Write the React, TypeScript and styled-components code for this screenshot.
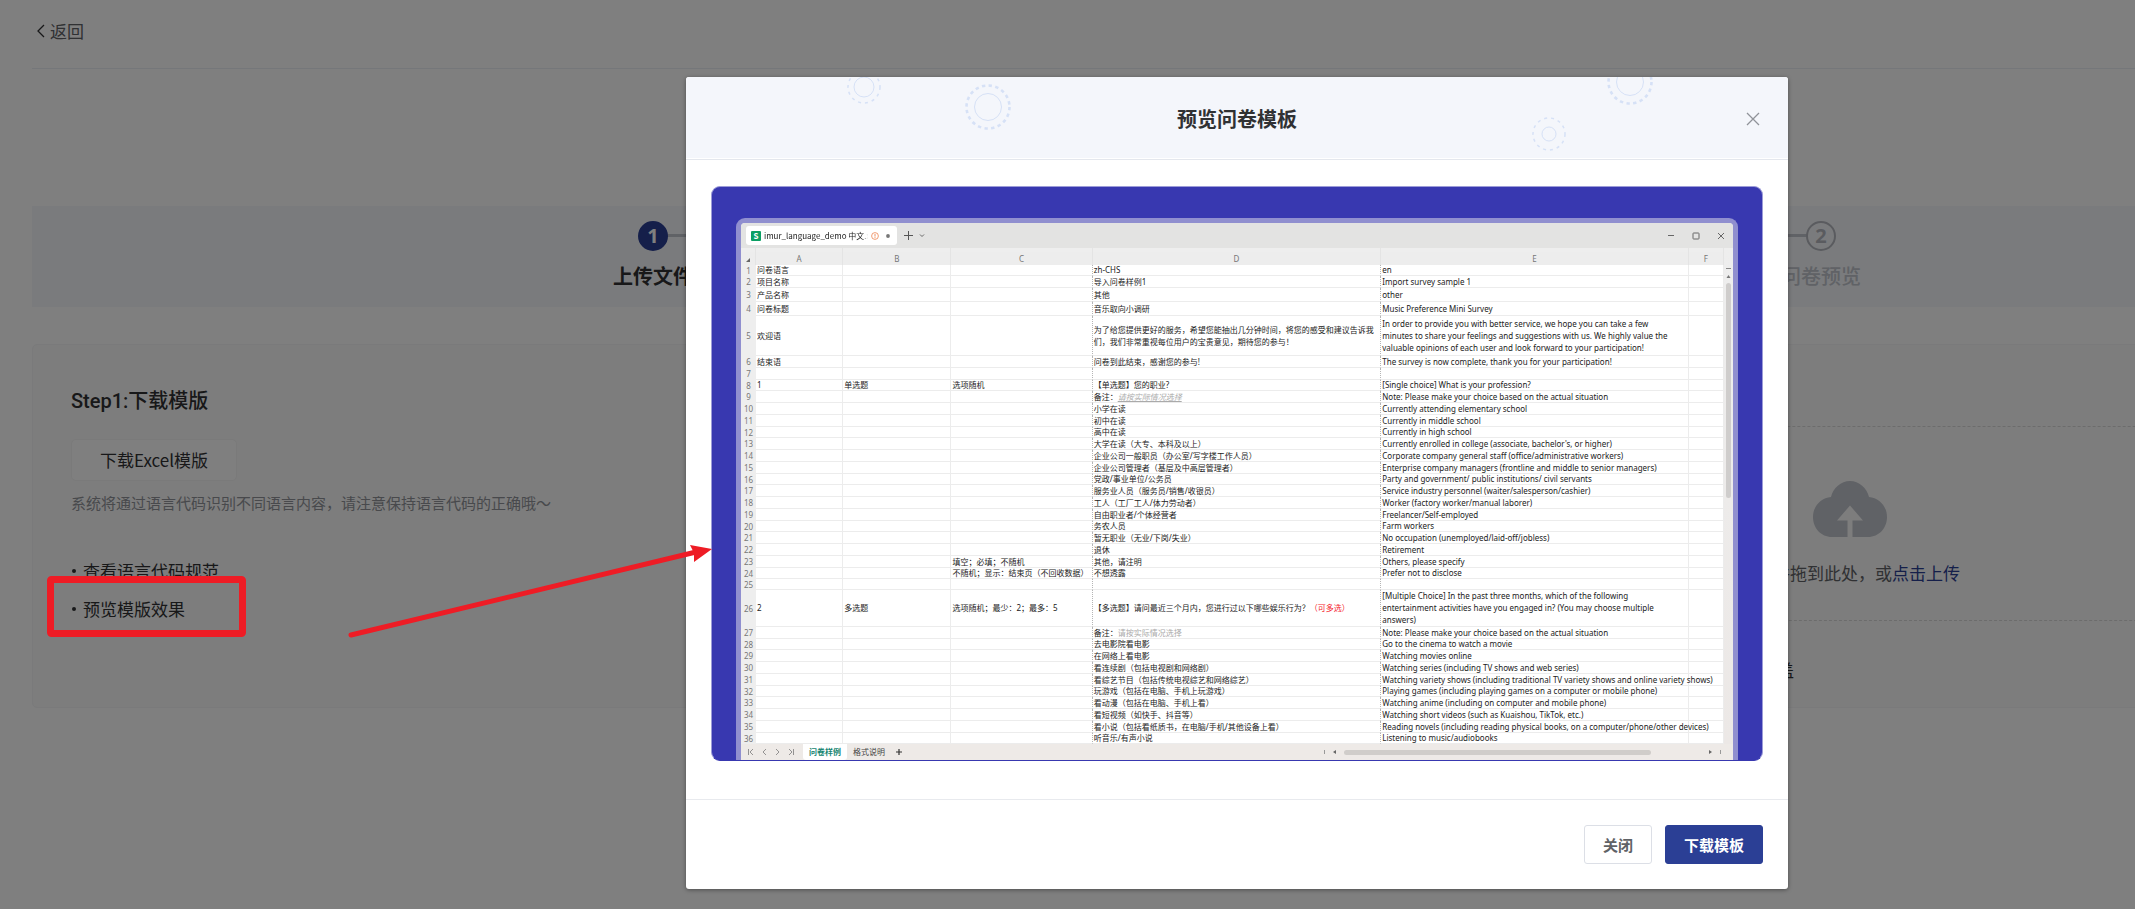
import React from "react";
import styled, { createGlobalStyle, css } from "styled-components";

const GlobalStyle = createGlobalStyle`
  *, *::before, *::after { box-sizing: border-box; }
  html, body { margin: 0; height: 100%; overflow: hidden; background: #fff; }
  body {
    font-family: "Noto Sans CJK SC", "Noto Sans", sans-serif;
    font-size: 17px;
    line-height: 24px;
    color: #303133;
  }
  button, input { font: inherit; }
`;

/* The workspace is wider than the window and is cut off at the right edge. */
const Page = styled.div`
  position: relative;
  width: calc(100vw + 339px);
  min-height: 100vh;
  padding: 0 32px;
`;

const TopBar = styled.header`
  display: flex;
  align-items: center;
  height: 69px;
  padding: 0 0 7px 4px;
  border-bottom: 1px solid #ebeef5;
`;

const BackLink = styled.a`
  display: flex;
  align-items: center;
  gap: 5px;
  color: #606266;
  text-decoration: none;
`;

const StepBar = styled.ol`
  display: flex;
  list-style: none;
  margin: 137px 0 0;
  padding: 15px 37px;
  height: 101px;
  background: #f5f7fa;
`;

const StepItem = styled.li<{ $active?: boolean }>`
  position: relative;
  flex: 1;
  display: flex;
  flex-direction: column;
  align-items: center;
  gap: 13px;
  font-size: 20px;
  font-weight: ${(p) => (p.$active ? 700 : 500)};
  color: ${(p) => (p.$active ? "#303133" : "#c0c4cc")};

  &:not(:last-child)::after {
    content: "";
    position: absolute;
    top: 13px;
    left: 50%;
    width: 100%;
    height: 3px;
    background: #c0c4cc;
  }
`;

const StepNumber = styled.span<{ $active?: boolean }>`
  position: relative;
  z-index: 1;
  display: flex;
  align-items: center;
  justify-content: center;
  width: 30px;
  height: 30px;
  border-radius: 50%;
  border: 2px solid ${(p) => (p.$active ? "#2b3f95" : "#b4b7be")};
  background: ${(p) => (p.$active ? "#2b3f95" : "#f5f7fa")};
  color: ${(p) => (p.$active ? "#fff" : "#b4b7be")};
  font-family: "Open Sans", sans-serif;
  font-weight: 700;
`;

const Cards = styled.main`
  display: grid;
  grid-template-columns: 1fr 1fr;
  gap: 40px;
  margin-top: 37px;
`;

const Card = styled.section`
  height: 364px;
  padding: 44px 38px 0;
  border: 1px solid #f4f5f7;
  border-radius: 5px;
  background: #fafafa;
`;

const CardTitle = styled.h2`
  margin: 0;
  font-family: Roboto, "Noto Sans CJK SC", sans-serif;
  font-size: 20px;
  font-weight: 500;
  line-height: 24px;
  color: #303133;
`;

const TemplateButton = styled.button`
  display: block;
  height: 42px;
  margin: 26px 0 10px;
  padding: 0 28px;
  border: 1px solid #f5f5f5;
  border-radius: 5px;
  background: #fff;
  color: #303133;
`;

const Hint = styled.p`
  margin: 0;
  font-size: 15px;
  color: #909399;
`;

const Notes = styled.ul`
  list-style: none;
  margin: 44px 0 0;
  padding: 0;
  display: grid;
  gap: 14px;
`;

const Note = styled.li`
  display: flex;
  align-items: center;
  gap: 7px;
  color: #303133;

  &::before {
    content: "";
    width: 4px;
    height: 4px;
    margin-left: 1px;
    border-radius: 50%;
    background: #303133;
  }

  a { color: inherit; text-decoration: none; }
`;

const DropZone = styled.div`
  display: flex;
  flex-direction: column;
  align-items: center;
  height: 195px;
  margin-top: 13px;
  padding-top: 54px;
  border: 1px dashed #d9d9d9;
  border-radius: 6px;
  color: #606266;

  p { margin: 24px 0 0; }
  a { color: #2b3f95; text-decoration: none; }
`;

const UploadNotes = styled(Notes)`
  margin-top: 37px;
`;

const Overlay = styled.div`
  position: absolute;
  inset: 0;
  display: flex;
  justify-content: center;
  align-items: flex-start;
  padding-top: 77px;
  background: rgba(0, 0, 0, 0.5);
  z-index: 2;
`;

const Dialog = styled.div`
  width: 1102px;
  border-radius: 3px;
  background: #fff;
  box-shadow: 0 1px 4px rgba(0, 0, 0, 0.4);
  overflow: hidden;
`;

const DialogHeader = styled.header`
  position: relative;
  display: grid;
  grid-template-columns: 1fr auto 1fr;
  align-items: center;
  height: 82px;
  padding: 2px 25px 0;
  background: #f4f6fb;
  border-bottom: 1px solid #fff;
`;

const HeaderArt = styled.svg`
  position: absolute;
  inset: 0;
  width: 100%;
  height: 100%;
`;

const DialogTitle = styled.h1`
  grid-column: 2;
  position: relative;
  margin: 0;
  font-size: 20px;
  line-height: 28px;
  font-weight: 700;
  color: #303133;
`;

const CloseIcon = styled.button`
  position: relative;
  justify-self: end;
  display: flex;
  width: 20px;
  height: 20px;
  padding: 3px;
  border: 0;
  background: none;
`;

const DialogBody = styled.div`
  padding: 26px 25px 38px;
  border-top: 1px solid #e4e7ed;
  border-bottom: 1px solid #e8eaee;
`;

const DialogFooter = styled.footer`
  display: flex;
  justify-content: flex-end;
  gap: 13px;
  padding: 25px;
`;

const ActionButton = styled.button<{ $primary?: boolean }>`
  height: 39px;
  padding: 0 18px;
  border: 1px solid ${(p) => (p.$primary ? "#2b3f95" : "#dcdfe6")};
  border-radius: 3px;
  background: ${(p) => (p.$primary ? "#2b3f95" : "#fff")};
  color: ${(p) => (p.$primary ? "#fff" : "#606266")};
  font-size: 15px;
  font-weight: 700;
  line-height: 20px;
`;

const Preview = styled.figure`
  display: flex;
  margin: 0;
  padding: 31px 24px 0;
  height: 575px;
  border: 1px solid #9c9cd8;
  border-bottom-color: #3838b0;
  border-radius: 9px;
  background: #3838b0;
  overflow: hidden;
`;

const SheetWindow = styled.div`
  flex: 1;
  min-width: 0;
  display: flex;
  flex-direction: column;
  border: 5px solid #908fcf;
  border-bottom: 0;
  border-radius: 9px 9px 0 0;
  background: #eeeeee;
  overflow: hidden;
  font-size: 8px;
  line-height: 12px;
  color: #222;
`;

const TitleBar = styled.div`
  display: flex;
  align-items: center;
  height: 25px;
  padding: 0 6px 0 5px;
  background: #e3e3e2;
`;

const FileTab = styled.div`
  display: flex;
  align-items: center;
  gap: 3px;
  width: 151px;
  height: 19px;
  padding: 0 5px;
  border-radius: 3px;
  background: #fff;

  svg { flex: none; }
`;

const FileBadge = styled.span`
  flex: none;
  display: flex;
  align-items: center;
  justify-content: center;
  width: 10px;
  height: 10px;
  border-radius: 1px;
  background: #0b9f64;
  color: #fff;
  font-weight: 700;
`;

const FileName = styled.span`
  flex: 1;
  overflow: hidden;
  white-space: nowrap;
  mask-image: linear-gradient(to right, #000 95%, transparent);
`;

const TabTools = styled.div`
  display: flex;
  align-items: center;
  gap: 6px;
  margin-left: 7px;
`;

const WindowTools = styled.div`
  display: flex;
  align-items: center;
  gap: 13px;
  margin-left: auto;
`;

const SheetArea = styled.div`
  display: flex;
`;

const Sheet = styled.table`
  flex: 1;
  width: 100%;
  min-width: 0;
  table-layout: fixed;
  border-collapse: separate;
  border-spacing: 0;
  background: #fff;
  font-family: "Noto Sans", "Noto Sans CJK SC", sans-serif;

  thead th {
    height: 17px;
    padding: 4px 0 0;
    background: linear-gradient(#eeeeee 4px, transparent 4px), #ededed;
    border-right: 1px solid #e4e4e4;
    font-weight: 400;
    color: #777;
  }

  tbody tr { height: 12px; }
  tbody tr:nth-child(4n) { height: 11px; }

  tbody th {
    padding: 0;
    background: #eeeeee;
    font-weight: 400;
    color: #777;
    line-height: 10px;
  }

  tbody td {
    padding: 0 0 0 1px;
    border-right: 1px solid #ececec;
    border-bottom: 1px solid #ececec;
    white-space: pre;
    line-height: 10px;
  }

  tbody td:nth-child(4),
  tbody td:nth-child(5) { border-right: 1px dotted #b5b5b5; }
`;

const Row = styled.tr<{ $height?: number }>`
  ${(p) =>
    p.$height &&
    css`
      &&& { height: ${p.$height}px; }
    `}
  ${(p) =>
    p.$height &&
    p.$height > 20 &&
    css`
      &&& td { line-height: 12px; }
    `}
`;

const Placeholder = styled.span<{ $marked?: boolean }>`
  color: #aaa;
  ${(p) => p.$marked && "font-style: italic; text-decoration: underline;"}
`;

const Multi = styled.span`
  color: #f5232d;
`;

const VerticalScroll = styled.div`
  position: relative;
  flex: none;
  display: flex;
  flex-direction: column;
  align-items: center;
  width: 9px;
  padding-top: 19px;
  background: linear-gradient(#eeeeee, #ece8e6);
`;

const VerticalThumb = styled.div`
  width: 5px;
  height: 215px;
  margin-top: 2px;
  border-radius: 3px;
  background: #cfcdcc;
`;

const SheetTabs = styled.div`
  flex: 1;
  display: flex;
  align-items: center;
  padding: 0 10px 0 6px;
  background: #eeeae7;
  color: #555;
`;

const SheetTab = styled.span<{ $active?: boolean }>`
  align-self: stretch;
  padding: 2px 6px 0;
  border-radius: 0 0 3px 3px;
  background: ${(p) => (p.$active ? "#fff" : "transparent")};
  color: ${(p) => (p.$active ? "#168571" : "#444")};
  font-weight: ${(p) => (p.$active ? 700 : 400)};
`;

const HorizontalScroll = styled.div`
  display: flex;
  align-items: center;
  margin-left: auto;
`;

const HorizontalThumb = styled.div`
  width: 307px;
  height: 5px;
  margin: 0 56px 0 5px;
  border-radius: 3px;
  background: #d0cdca;
`;

const Annotation = styled.svg`
  position: absolute;
  top: 0;
  left: 0;
  z-index: 3;
  pointer-events: none;
`;

type Line = {
  a?: string;
  b?: string;
  c?: string;
  d?: React.ReactNode;
  e?: string;
  h?: number;
};

const rows: Line[] = [
  { a: "问卷语言", d: "zh-CHS", e: "en", h: 11 },
  { a: "项目名称", d: "导入问卷样例1", e: "Import survey sample 1" },
  { a: "产品名称", d: "其他", e: "other", h: 14 },
  { a: "问卷标题", d: "音乐取向小调研", e: "Music Preference Mini Survey", h: 14 },
  {
    a: "欢迎语",
    d: "为了给您提供更好的服务，希望您能抽出几分钟时间，将您的感受和建议告诉我\n们，我们非常重视每位用户的宝贵意见，期待您的参与！",
    e: "In order to provide you with better service, we hope you can take a few\nminutes to share your feelings and suggestions with us. We highly value the\nvaluable opinions of each user and look forward to your participation!",
    h: 40,
  },
  { a: "结束语", d: "问卷到此结束，感谢您的参与!", e: "The survey is now complete, thank you for your participation!" },
  {},
  { a: "1", b: "单选题", c: "选项随机", d: "【单选题】您的职业?", e: "[Single choice] What is your profession?" },
  {
    d: <>备注：<Placeholder $marked>请按实际情况选择</Placeholder></>,
    e: "Note: Please make your choice based on the actual situation",
  },
  { d: "小学在读", e: "Currently attending elementary school" },
  { d: "初中在读", e: "Currently in middle school" },
  { d: "高中在读", e: "Currently in high school" },
  { d: "大学在读（大专、本科及以上）", e: "Currently enrolled in college (associate, bachelor's, or higher)" },
  { d: "企业公司一般职员（办公室/写字楼工作人员）", e: "Corporate company general staff (office/administrative workers)" },
  { d: "企业公司管理者（基层及中高层管理者）", e: "Enterprise company managers (frontline and middle to senior managers)" },
  { d: "党政/事业单位/公务员", e: "Party and government/ public institutions/ civil servants" },
  { d: "服务业人员（服务员/销售/收银员）", e: "Service industry personnel (waiter/salesperson/cashier)" },
  { d: "工人（工厂工人/体力劳动者）", e: "Worker (factory worker/manual laborer)" },
  { d: "自由职业者/个体经营者", e: "Freelancer/Self-employed" },
  { d: "务农人员", e: "Farm workers" },
  { d: "暂无职业（无业/下岗/失业）", e: "No occupation (unemployed/laid-off/jobless)" },
  { d: "退休", e: "Retirement" },
  { c: "填空；必填；不随机", d: "其他，请注明", e: "Others, please specify" },
  { c: "不随机；显示：结束页（不回收数据）", d: "不想透露", e: "Prefer not to disclose" },
  { h: 11 },
  {
    a: "2",
    b: "多选题",
    c: "选项随机；最少：2；最多：5",
    d: <>【多选题】请问最近三个月内，您进行过以下哪些娱乐行为？<Multi>（可多选）</Multi></>,
    e: "[Multiple Choice] In the past three months, which of the following\nentertainment activities have you engaged in? (You may choose multiple\nanswers)",
    h: 37,
  },
  {
    d: <>备注：<Placeholder>请按实际情况选择</Placeholder></>,
    e: "Note: Please make your choice based on the actual situation",
  },
  { d: "去电影院看电影", e: "Go to the cinema to watch a movie" },
  { d: "在网络上看电影", e: "Watching movies online" },
  { d: "看连续剧（包括电视剧和网络剧）", e: "Watching series (including TV shows and web series)" },
  { d: "看综艺节目（包括传统电视综艺和网络综艺）", e: "Watching variety shows (including traditional TV variety shows and online variety shows)" },
  { d: "玩游戏（包括在电脑、手机上玩游戏）", e: "Playing games (including playing games on a computer or mobile phone)" },
  { d: "看动漫（包括在电脑、手机上看）", e: "Watching anime (including on computer and mobile phone)" },
  { d: "看短视频（如快手、抖音等）", e: "Watching short videos (such as Kuaishou, TikTok, etc.)" },
  { d: "看小说（包括看纸质书，在电脑/手机/其他设备上看）", e: "Reading novels (including reading physical books, on a computer/phone/other devices)" },
  { d: "听音乐/有声小说", e: "Listening to music/audiobooks" },
];

const columns = [
  { name: "A", width: 87 },
  { name: "B", width: 108 },
  { name: "C", width: 141 },
  { name: "D", width: 288 },
  { name: "E", width: 307 },
  { name: "F", width: 35 },
];

const rings = [
  { x: 178, y: 10, inner: 10, outer: 16, width: 1.5, dash: "3 4" },
  { x: 302, y: 30, inner: 13.5, outer: 21.5, width: 2.6, dash: "3.4 3.35" },
  { x: 944, y: 5, inner: 13.5, outer: 21.5, width: 2.6, dash: "3.4 3.35" },
  { x: 863, y: 57, inner: 7, outer: 16, width: 1.5, dash: "3 4" },
];

function SheetPreview() {
  return (
    <Preview>
      <SheetWindow>
        <TitleBar>
          <FileTab>
            <FileBadge>S</FileBadge>
            <FileName>imur_language_demo 中文.xlsx</FileName>
            <svg width="8" height="8" viewBox="0 0 8 8" fill="none" stroke="#ee8450">
              <circle cx="4" cy="4" r="3.4" strokeWidth="0.8" />
              <path d="M4 2v2.6M4 5.2v.9" strokeWidth="0.9" />
            </svg>
            <svg width="10" height="8" viewBox="0 0 10 8">
              <circle cx="6" cy="4" r="1.9" fill="#777" />
            </svg>
          </FileTab>
          <TabTools>
            <svg width="9" height="9" viewBox="0 0 9 9" stroke="#555">
              <path d="M4.5 0v9M0 4.5h9" />
            </svg>
            <svg width="6" height="5" viewBox="0 0 6 5" fill="none" stroke="#666">
              <path d="M1 1.5l2 2 2-2" />
            </svg>
          </TabTools>
          <WindowTools>
            <svg width="12" height="10" viewBox="0 0 12 10" stroke="#666">
              <path d="M3 4.5h6" />
            </svg>
            <svg width="12" height="10" viewBox="0 0 12 10" fill="none" stroke="#666">
              <rect x="3" y="2" width="6" height="6" rx="0.6" />
            </svg>
            <svg width="12" height="10" viewBox="0 0 12 10" stroke="#666">
              <path d="M3 2l6 6M9 2l-6 6" />
            </svg>
          </WindowTools>
        </TitleBar>
        <SheetArea>
          <Sheet>
            <colgroup>
              <col width={15} />
              {columns.map((c) => (
                <col key={c.name} width={c.width} />
              ))}
            </colgroup>
            <thead>
              <tr>
                <th>
                  <svg width="4" height="4" viewBox="0 0 4 4">
                    <path d="M4 0v4H0z" fill="#666" />
                  </svg>
                </th>
                {columns.map((c) => (
                  <th key={c.name} scope="col">{c.name}</th>
                ))}
              </tr>
            </thead>
            <tbody>
              {rows.map((r, i) => (
                <Row key={i} $height={r.h}>
                  <th scope="row">{i + 1}</th>
                  <td>{r.a}</td>
                  <td>{r.b}</td>
                  <td>{r.c}</td>
                  <td>{r.d}</td>
                  <td>{r.e}</td>
                  <td />
                </Row>
              ))}
            </tbody>
          </Sheet>
          <VerticalScroll>
            <svg width="7" height="14" viewBox="0 0 7 14">
              <path d="M1 1.5h5" stroke="#888" />
              <path d="M3.5 8l2 3h-4z" fill="#777" />
            </svg>
            <VerticalThumb />
          </VerticalScroll>
        </SheetArea>
        <SheetTabs>
          <svg width="56" height="8" viewBox="0 0 56 8" fill="none" stroke="#888" strokeWidth="0.9">
            <path d="M1.5 1v6M6 1L3 4l3 3M19 1l-3 3 3 3M29 1l3 3-3 3M42 1l3 3-3 3M46.5 1v6" />
          </svg>
          <SheetTab $active>问卷样例</SheetTab>
          <SheetTab>格式说明</SheetTab>
          <svg width="16" height="8" viewBox="0 0 16 8" stroke="#333" strokeWidth="1.2">
            <path d="M8 1v6M5 4h6" />
          </svg>
          <HorizontalScroll>
            <svg width="16" height="8" viewBox="0 0 16 8">
              <path d="M1.5 2v4" stroke="#999" />
              <path d="M13 2v4l-3-2z" fill="#666" />
            </svg>
            <HorizontalThumb />
            <svg width="16" height="8" viewBox="0 0 16 8">
              <path d="M2 2v4l3-2z" fill="#666" />
              <path d="M13.5 2v4" stroke="#999" />
            </svg>
          </HorizontalScroll>
        </SheetTabs>
      </SheetWindow>
    </Preview>
  );
}

export default function App() {
  return (
    <>
      <GlobalStyle />
      <Page>
        <TopBar>
          <BackLink href="#back">
            <svg width="9" height="14" viewBox="0 0 9 14" fill="none" stroke="#303133" strokeWidth="1.3">
              <path d="M8 1L2 7l6 6" />
            </svg>
            返回
          </BackLink>
        </TopBar>

        <StepBar>
          <StepItem $active>
            <StepNumber $active>1</StepNumber>
            上传文件
          </StepItem>
          <StepItem>
            <StepNumber>2</StepNumber>
            问卷预览
          </StepItem>
        </StepBar>

        <Cards>
          <Card>
            <CardTitle>Step1:下载模版</CardTitle>
            <TemplateButton type="button">下载Excel模版</TemplateButton>
            <Hint>系统将通过语言代码识别不同语言内容，请注意保持语言代码的正确哦～</Hint>
            <Notes>
              <Note><a href="#codes">查看语言代码规范</a></Note>
              <Note><a href="#preview">预览模版效果</a></Note>
            </Notes>
          </Card>
          <Card>
            <CardTitle>Step2:上传文件</CardTitle>
            <DropZone>
              <svg width="74" height="56" viewBox="0 0 74 56">
                <path
                  fill="#c0c4cc"
                  d="M18 16C20 7 28 0 37 0s17 7 19 16c10 1 18 9 18 20 0 11-8 20-19 20H39.5V39.5H50L37 24.5 24 39.5h10.5V56H19C8 56 0 47 0 36 0 25 8 17 18 16z"
                />
              </svg>
              <p>将文件拖到此处，或<a href="#upload">点击上传</a></p>
            </DropZone>
            <UploadNotes>
              <Note>仅支持上传 Excel文件，再次上传后原有的问卷内容也将会被覆盖</Note>
            </UploadNotes>
          </Card>
        </Cards>

        <Overlay>
          <Dialog role="dialog" aria-modal="true" aria-labelledby="dialog-title">
            <DialogHeader>
              <HeaderArt fill="none" stroke="#d6e1f6">
                {rings.map((r) => (
                  <g key={r.x}>
                    <circle cx={r.x} cy={r.y} r={r.inner} />
                    <circle cx={r.x} cy={r.y} r={r.outer} strokeWidth={r.width} strokeDasharray={r.dash} />
                  </g>
                ))}
              </HeaderArt>
              <DialogTitle id="dialog-title">预览问卷模板</DialogTitle>
              <CloseIcon type="button" aria-label="关闭">
                <svg width="14" height="14" viewBox="0 0 14 14" stroke="#909399" strokeWidth="1.3">
                  <path d="M1 1l12 12M13 1L1 13" />
                </svg>
              </CloseIcon>
            </DialogHeader>
            <DialogBody>
              <SheetPreview />
            </DialogBody>
            <DialogFooter>
              <ActionButton type="button">关闭</ActionButton>
              <ActionButton type="button" $primary>下载模板</ActionButton>
            </DialogFooter>
          </Dialog>
        </Overlay>

        <Annotation width="760" height="700" viewBox="0 0 760 700">
          <rect x="50.5" y="579.5" width="192" height="54" rx="1" fill="none" stroke="#ee1c25" strokeWidth="7" />
          <path d="M351 635L696 552" stroke="#ee1c25" strokeWidth="5" strokeLinecap="round" />
          <path d="M712 549L690 545l4 8 0 9z" fill="#ee1c25" />
        </Annotation>
      </Page>
    </>
  );
}
